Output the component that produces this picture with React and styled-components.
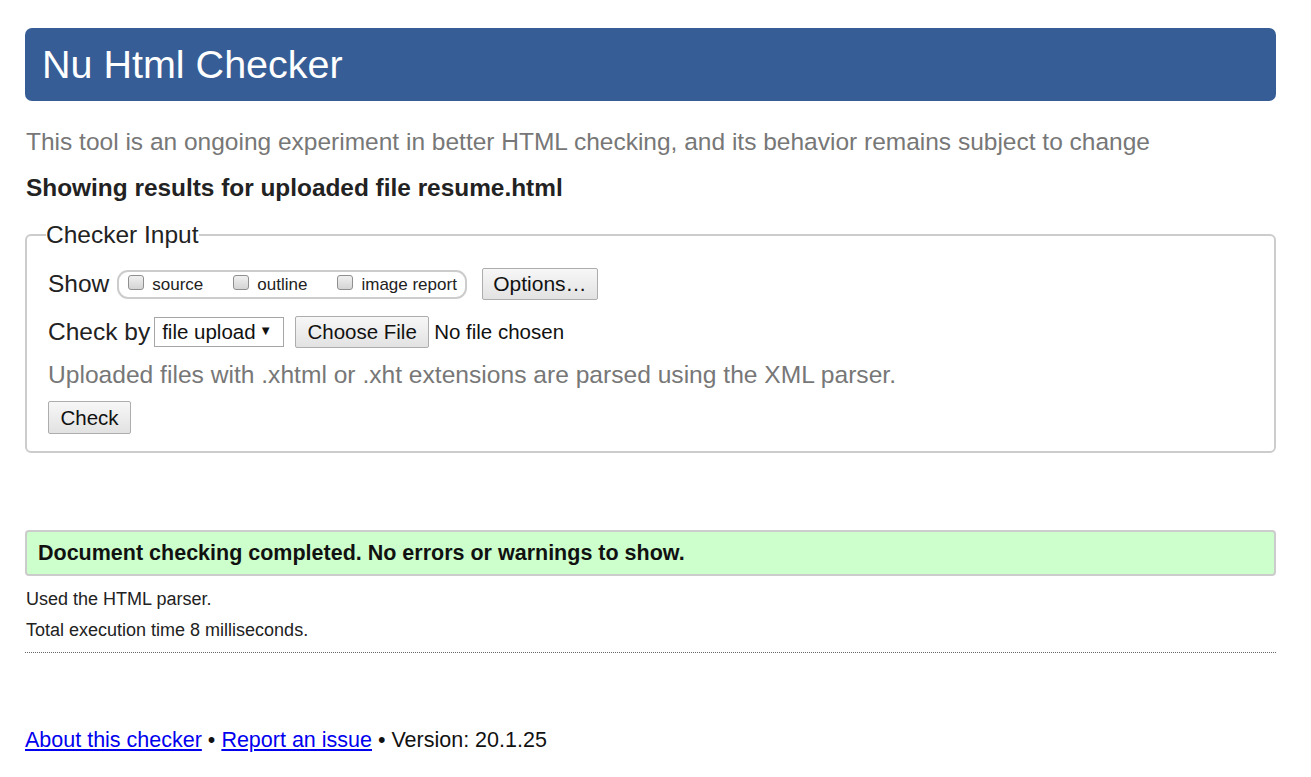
import React from "react";
import styled, { createGlobalStyle } from "styled-components";

const GlobalStyle = createGlobalStyle`
  body {
    margin: 0;
    padding: 0;
    background: #fff;
    font-family: "Liberation Sans", Arial, sans-serif;
    color: #222;
  }
`;

const Page = styled.div`
  padding: 28px 35px 0 25px;
`;

const Header = styled.h1`
  margin: 0;
  height: 73px;
  display: flex;
  align-items: center;
  padding: 0 17px;
  background: #365d95;
  border-radius: 7px;
  color: #fff;
  font-size: 39.5px;
  font-weight: normal;
`;

const Subtitle = styled.p`
  margin: 27px 0 0 1px;
  font-size: 24.5px;
  line-height: 28px;
  color: #777;
`;

const ResultsTitle = styled.h2`
  margin: 18px 0 0 1px;
  font-size: 24.4px;
  line-height: 28px;
  font-weight: bold;
  color: #222;
`;

const Fieldset = styled.fieldset`
  margin: 19px 0 0;
  padding: 19px 20px 17px 21px;
  border: 2px solid #ccc;
  border-radius: 6px;
`;

const Legend = styled.legend`
  padding: 0;
  margin-left: -2px;
  font-size: 24.5px;
  line-height: 28px;
  color: #222;
`;

const Row = styled.div`
  display: flex;
  align-items: center;
  margin-top: ${(p) => p.$top || 0}px;
`;

const RowLabel = styled.span`
  font-size: 24.5px;
  color: #222;
  margin-right: ${(p) => p.$gap}px;
`;

const CheckGroup = styled.div`
  display: flex;
  align-items: center;
  height: 25px;
  padding: 0 8px 0 9px;
  border: 2px solid #ccc;
  border-radius: 11px;
  margin-right: 15px;
  margin-top: 1px;
`;

const CheckItem = styled.label`
  display: flex;
  align-items: center;
  gap: 8px;
  margin-right: ${(p) => (p.$last ? 0 : 30)}px;
  font-size: 17px;
  color: #222;
`;

const Box = styled.span`
  width: 16px;
  height: 15px;
  margin-top: -5px;
  box-sizing: border-box;
  border: 1px solid #8f8f8f;
  border-radius: 3px;
  background: linear-gradient(#f0f0f0, #d4d4d4);
`;

const Button = styled.button`
  font-family: "Liberation Sans", Arial, sans-serif;
  font-size: ${(p) => p.$fs || 20.5}px;
  color: #111;
  height: ${(p) => p.$h || 32}px;
  width: ${(p) => p.$w}px;
  padding: 0;
  margin-right: ${(p) => p.$mr || 0}px;
  border: 1px solid #adadad;
  border-radius: 2px;
  background: linear-gradient(#f7f7f7, #e2e2e2);
`;

const Select = styled.div`
  display: flex;
  align-items: center;
  justify-content: space-between;
  width: 130px;
  height: 30px;
  box-sizing: border-box;
  padding: 0 11px 0 7px;
  border: 1px solid #a6a6a6;
  background: #fff;
  font-size: 20.5px;
  color: #111;
  margin-right: 11px;
`;

const Arrow = styled.span`
  font-size: 13px;
  margin-top: -3px;
`;

const FileText = styled.span`
  font-size: 20.5px;
  color: #111;
`;

const Hint = styled.p`
  margin: 13px 0 0;
  font-size: 24.6px;
  line-height: 28px;
  color: #777;
`;

const Result = styled.div`
  margin-top: 77px;
  height: 46px;
  box-sizing: border-box;
  display: flex;
  align-items: center;
  padding: 0 11px;
  background: #ccffcc;
  border: 2px solid #ccc;
  border-radius: 4px;
  font-size: 21.5px;
  font-weight: bold;
  color: #111;
`;

const Note = styled.p`
  margin: ${(p) => p.$top}px 0 0 1px;
  font-size: 18px;
  line-height: 20px;
  color: #222;
`;

const Divider = styled.hr`
  margin: 12px 0 0;
  border: 0;
  border-top: 1px dotted #666;
`;

const Footer = styled.p`
  margin: 75px 0 0;
  font-size: 21.5px;
  line-height: 24px;
  color: #111;
`;

const Link = styled.a`
  color: #0000ee;
  text-decoration: underline;
`;

export default function App() {
  return (
    <>
      <GlobalStyle />
      <Page>
        <Header>Nu Html Checker</Header>
        <Subtitle>
          This tool is an ongoing experiment in better HTML checking, and its
          behavior remains subject to change
        </Subtitle>
        <ResultsTitle>Showing results for uploaded file resume.html</ResultsTitle>
        <Fieldset>
          <Legend>Checker Input</Legend>
          <Row>
            <RowLabel $gap={8}>Show</RowLabel>
            <CheckGroup>
              <CheckItem>
                <Box />
                source
              </CheckItem>
              <CheckItem>
                <Box />
                outline
              </CheckItem>
              <CheckItem $last>
                <Box />
                image report
              </CheckItem>
            </CheckGroup>
            <Button $w={116} $fs={21}>Options…</Button>
          </Row>
          <Row $top={16}>
            <RowLabel $gap={4}>Check by</RowLabel>
            <Select>
              file upload
              <Arrow>▼</Arrow>
            </Select>
            <Button $w={134} $mr={5}>Choose File</Button>
            <FileText>No file chosen</FileText>
          </Row>
          <Hint>
            Uploaded files with .xhtml or .xht extensions are parsed using the
            XML parser.
          </Hint>
          <Row $top={12}>
            <Button $h={33} $w={83}>Check</Button>
          </Row>
        </Fieldset>
        <Result>Document checking completed. No errors or warnings to show.</Result>
        <Note $top={13}>Used the HTML parser.</Note>
        <Note $top={11}>Total execution time 8 milliseconds.</Note>
        <Divider />
        <Footer>
          <Link href="#">About this checker</Link> •{" "}
          <Link href="#">Report an issue</Link> • Version: 20.1.25
        </Footer>
      </Page>
    </>
  );
}
